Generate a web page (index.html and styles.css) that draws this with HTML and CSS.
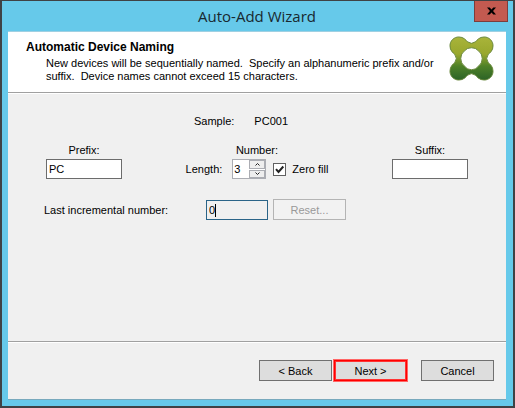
FILE: index.html
```html
<!DOCTYPE html>
<html lang="en">
<head>
<meta charset="utf-8">
<title>Auto-Add Wizard</title>
<link rel="stylesheet" href="styles.css">
</head>
<body>
<form class="window">
  <div class="titlebar">
    <h1 class="title">Auto-Add Wizard</h1>
    <button class="close" type="button" aria-label="Close">
      <svg width="9" height="8" viewBox="0 0 10 8"><path d="M0 0h3l2 2.400L7 0h3L6.700 4 10 8H7L5 5.600 3 8H0l3.300-4z" fill="#000"/></svg>
    </button>
  </div>
  <main class="content">
    <header class="header">
      <div class="intro">
        <h2 class="heading">Automatic Device Naming</h2>
        <p class="description">New devices will be sequentially named.&nbsp; Specify an alphanumeric prefix and/or<br>suffix.&nbsp; Device names cannot exceed 15 characters.</p>
      </div>
      <svg class="logo" width="45" height="45" viewBox="0 0 46 46" aria-hidden="true">
        <defs>
          <linearGradient id="green" x1="0" y1="0" x2="0" y2="1">
            <stop offset="0" stop-color="#a9b43a"/>
            <stop offset=".4" stop-color="#98a72d"/>
            <stop offset=".68" stop-color="#4e8128"/>
            <stop offset="1" stop-color="#2c6326"/>
          </linearGradient>
        </defs>
        <path fill="url(#green)" stroke="#68873b" stroke-width="1" fill-rule="evenodd" d="M10 1C15 1 17 4 19 6Q23 9 27 6C29 4 31 1 36 1C41 1 45 5 45 10C45 15 42 17 40 19Q37 23 40 27C42 29 45 31 45 36C45 41 41 45 36 45C31 45 29 42 27 40Q23 37 19 40C17 42 15 45 10 45C5 45 1 41 1 36C1 31 4 29 6 27Q9 23 6 19C4 17 1 15 1 10C1 5 5 1 10 1ZM23 12Q18.500 12 16 15Q12 18 12 23Q12 28 16 31Q18.500 34.500 23 34.500Q27.500 34.500 30 31Q34 28 34 23Q34 18 30 15Q27.500 12 23 12Z"/>
      </svg>
    </header>
    <section class="fields">
      <p class="sample"><span>Sample:</span><output>PC001</output></p>
      <div class="naming">
        <div class="field">
          <label for="prefix">Prefix:</label>
          <input class="box" id="prefix" type="text" value="PC">
        </div>
        <div class="field">
          <span>Number:</span>
          <div class="number">
            <label for="length">Length:</label>
            <div class="spinner">
              <input id="length" type="text" inputmode="numeric" value="3">
              <div class="steps">
                <button type="button" aria-label="Increase"><svg width="5" height="3" viewBox="0 0 5 3"><path d="M.5 2.500l2-2 2 2" fill="none" stroke="#222"/></svg></button>
                <button type="button" aria-label="Decrease"><svg width="5" height="3" viewBox="0 0 5 3"><path d="M.5.5l2 2 2-2" fill="none" stroke="#222"/></svg></button>
              </div>
            </div>
            <label class="zero"><span class="tick"><input type="checkbox" checked><svg width="13" height="13" viewBox="0 0 13 13"><path d="M3 6.200l2.500 2.800L10.300 3.500" fill="none" stroke="#222" stroke-width="2"/></svg></span>Zero fill</label>
          </div>
        </div>
        <div class="field">
          <label for="suffix">Suffix:</label>
          <input class="box" id="suffix" type="text">
        </div>
      </div>
      <div class="last">
        <label for="last">Last incremental number:</label>
        <div class="focused"><input id="last" type="text" value="0"><span class="caret"></span></div>
        <button class="button" type="button" disabled>Reset...</button>
      </div>
    </section>
    <footer class="footer">
      <button class="button" type="button">&lt; Back</button>
      <button class="button next" type="submit">Next &gt;</button>
      <button class="button cancel" type="button">Cancel</button>
    </footer>
  </main>
</form>
</body>
</html>
```
FILE: styles.css
```css
* { box-sizing: border-box; }

body {
  margin: 0;
  font: 11px/14px "Liberation Sans", Arial, sans-serif;
  color: #000;
}

h1, h2, p { margin: 0; }

button, input { font: inherit; color: inherit; margin: 0; padding: 0; }

.window {
  display: flex;
  flex-direction: column;
  min-height: 100vh;
  padding: 0 7px 6px 6px;
  background: #66c9ea;
  border: 2px solid #3f4245;
  border-top-width: 1px;
}

.titlebar {
  position: relative;
  height: 30px;
  display: flex;
  align-items: center;
  justify-content: center;
}

.title {
  font: 15px/20px "Open Sans", "Noto Sans", sans-serif;
  color: #18282f;
}

.close {
  position: absolute;
  top: 0;
  right: -2px;
  width: 34px;
  height: 21px;
  display: flex;
  align-items: center;
  justify-content: center;
  background: #c35a50;
  border: 1px solid #7d3d3c;
  border-top: 0;
}

.content {
  flex: 1;
  display: flex;
  flex-direction: column;
  background: #f0f0f0;
  border-bottom: 1px solid #78a9bd;
}

.header {
  display: flex;
  justify-content: space-between;
  align-items: flex-start;
  height: 62px;
  padding: 4px 12px 0 18px;
  background: #fff;
  border-top: 1px solid #9fd0e2;
  border-bottom: 1px solid #a0a0a0;
}

.heading { padding-top: 4px; font: bold 12px/14px "Liberation Sans", sans-serif; color: #000; }

.description { padding: 3px 0 0 20px; line-height: 13px; white-space: nowrap; }

.logo { flex: none; }

.fields {
  flex: 1;
  padding: 20px 38px 0;
  border-top: 1px solid #fff;
}

.sample { display: flex; justify-content: center; gap: 20px; padding-right: 32px; }

.naming { display: flex; justify-content: space-between; margin-top: 15px; }

.field { display: flex; flex-direction: column; align-items: center; gap: 2px; }

.box { width: 76px; height: 20px; padding: 0 2px; background: #fff; border: 1px solid #6c6c6c; }

.number { display: flex; align-items: center; }

.spinner {
  display: flex;
  width: 34px;
  height: 20px;
  margin: 0 7px 0 10px;
  background: #fff;
  border: 1px solid #abadb3;
}

.spinner input { width: 16px; padding-left: 1px; border: 0; background: none; }

.steps { flex: 1; display: flex; flex-direction: column; gap: 1px; }

.steps button {
  flex: 1;
  display: flex;
  align-items: center;
  justify-content: center;
  background: #eee;
  border: 1px solid #abadb3;
}

.zero { display: flex; align-items: center; gap: 6px; }

.tick { position: relative; width: 13px; height: 13px; }

.tick input { display: block; width: 13px; height: 13px; appearance: none; background: #fff; border: 1px solid #606060; }

.tick svg { position: absolute; inset: 0; pointer-events: none; }

.last { display: flex; align-items: center; margin: 20px 0 0 -2px; }

.last label { width: 162px; }

.focused { position: relative; width: 62px; height: 20px; margin-right: 5px; }

.focused input { display: block; width: 100%; height: 100%; padding: 0 2px; background: #f0f0f0; border: 1px solid #2a6488; }

.caret { position: absolute; left: 9px; top: 4px; width: 1px; height: 13px; background: #000; }

.button { width: 73px; height: 21px; background: #ddd; border: 1px solid #707070; }

.button:disabled { background: #f2f2f2; border-color: #b4b4b4; color: #999; }

.footer {
  display: flex;
  justify-content: flex-end;
  gap: 2px;
  height: 58px;
  padding: 18px 12px 0;
  border-top: 1px solid #a0a0a0;
  box-shadow: inset 0 1px #fff;
}

.next { border: 1px solid #f00; outline: 1px solid #f66; box-shadow: inset 0 0 0 1px #f33; }

.cancel { margin-left: 12px; }
```
